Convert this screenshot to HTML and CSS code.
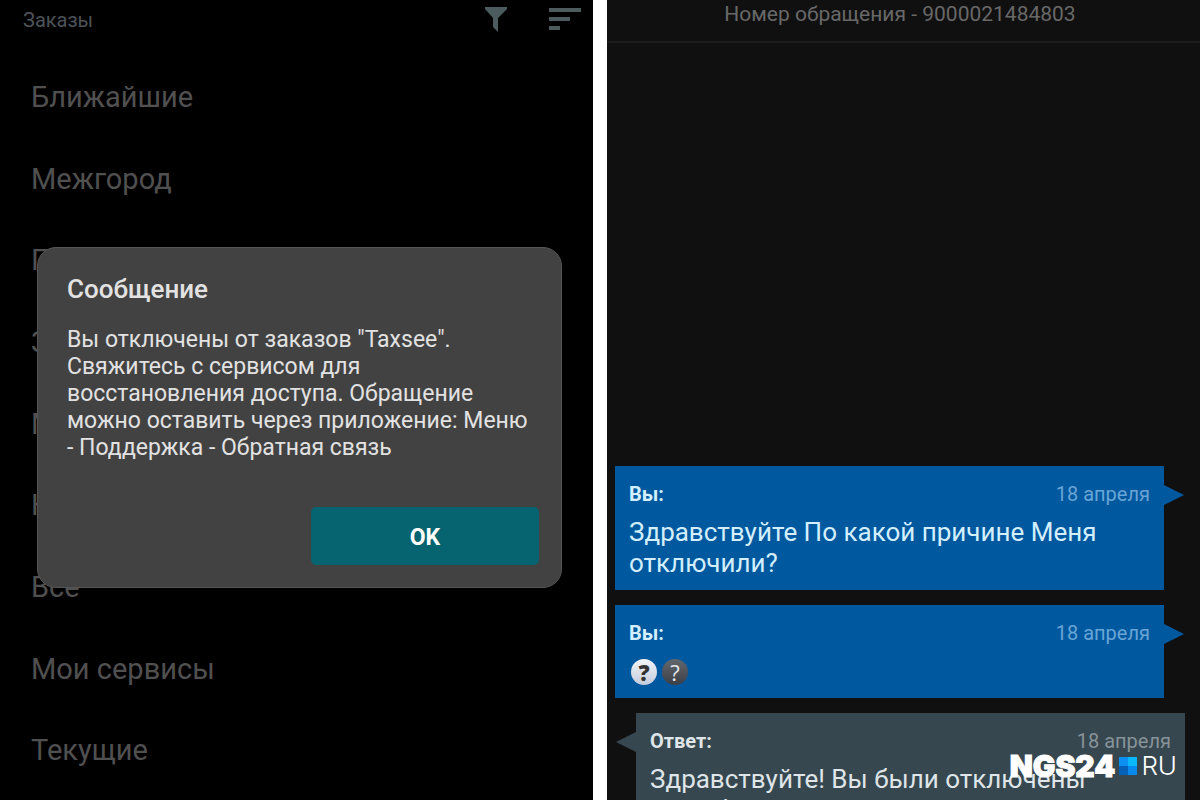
FILE: index.html
```html
<!DOCTYPE html>
<html lang="ru">
<head>
  <meta charset="UTF-8">
  <meta name="viewport" content="width=device-width, initial-scale=1.0">
  <title>Заказы</title>
  <link rel="stylesheet" href="styles.css">
</head>
<body>
  <main class="screens">
    <section class="orders">
      <header class="orders-header">
        <h1>Заказы</h1>
        <div class="tools">
          <button class="tool" type="button" aria-label="Фильтр">
            <svg width="24" height="28" viewBox="0 0 24 28"><path d="M1 1h22v2l-9 9v14l-5-5v-9L1 3z"/></svg>
          </button>
          <button class="tool" type="button" aria-label="Сортировка">
            <svg width="32" height="28" viewBox="0 0 32 28"><path d="M0 2h32v4H0zM0 11h21v4H0zM0 20h11v4H0z"/></svg>
          </button>
        </div>
      </header>
      <ul class="order-list">
        <li>Ближайшие</li>
        <li>Межгород</li>
        <li>П</li>
        <li>З</li>
        <li>М</li>
        <li>Н</li>
        <li>Все</li>
        <li>Мои сервисы</li>
        <li>Текущие</li>
      </ul>

      <div class="overlay">
        <div class="dialog" role="dialog" aria-labelledby="dialog-title">
          <h2 id="dialog-title">Сообщение</h2>
          <p>Вы отключены от заказов "Taxsee". Свяжитесь с сервисом для восстановления доступа. Обращение можно оставить через приложение: Меню - Поддержка - Обратная связь</p>
          <button class="ok" type="button">OK</button>
        </div>
      </div>
    </section>

    <section class="support">
      <header class="support-header">Номер обращения - 9000021484803</header>
      <div class="thread">
        <article class="message you">
          <div class="meta"><b>Вы:</b><time>18 апреля</time></div>
          <p>Здравствуйте По какой причине Меня отключили?</p>
        </article>
        <article class="message you">
          <div class="meta"><b>Вы:</b><time>18 апреля</time></div>
          <div class="smiles">
            <span class="smile light">?</span>
            <span class="smile dark">?</span>
          </div>
        </article>
        <article class="message answer">
          <div class="meta"><b>Ответ:</b><time>18 апреля</time></div>
          <p>Здравствуйте! Вы были отключены<br>по информации</p>
        </article>
      </div>

      <div class="watermark">
        <span class="brand">NGS24</span>
        <svg width="18" height="18" viewBox="0 0 18 18">
          <path fill="#0b8ff0" d="M0 0h9v9H0z"/>
          <path fill="#08b8fb" d="M9 0h9v9H9z"/>
          <path fill="#0560b8" d="M0 9h9v9H0z"/>
          <path fill="#0789ee" d="M9 9h9v9H9z"/>
        </svg>
        <span class="zone">RU</span>
      </div>
    </section>
  </main>
</body>
</html>
```
FILE: styles.css
```css
* {
  box-sizing: border-box;
}

body {
  margin: 0;
  font-family: Roboto, "Noto Sans", sans-serif;
  background: #fff;
}

h1, h2, p, ul {
  margin: 0;
  padding: 0;
}

button {
  border: none;
  padding: 0;
  font-family: inherit;
  cursor: pointer;
}

.screens {
  display: grid;
  grid-template-columns: 1fr 1fr;
  gap: 14px;
  height: 100vh;
}

.orders, .support {
  position: relative;
  display: flex;
  flex-direction: column;
  overflow: hidden;
}

/* Orders screen */
.orders {
  background: #000;
}

.orders-header {
  display: flex;
  justify-content: space-between;
  height: 56px;
  padding: 6px 12px 0 23px;
}

.orders-header h1 {
  font-size: 20px;
  font-weight: 400;
  line-height: 28px;
  color: #4d5358;
}

.tools {
  display: flex;
  align-items: flex-start;
  gap: 41px;
}

.tool {
  background: none;
}

.tool svg {
  display: block;
  fill: #4c5b5e;
}

.order-list {
  flex: 1;
  display: flex;
  flex-direction: column;
  padding: 0 31px 9px;
  list-style: none;
  font-size: 29px;
  color: #505050;
}

.order-list li {
  flex: 1;
  display: flex;
  align-items: center;
}

.overlay {
  position: absolute;
  inset: 0;
  display: flex;
  align-items: center;
  padding: 34px 31px 0 37px;
}

.dialog {
  flex: 1;
  display: flex;
  flex-direction: column;
  padding: 25px 22px 22px 29px;
  background: #424242;
  border: 1px solid #555;
  border-radius: 19px;
  color: #e2e2e2;
}

.dialog h2 {
  font-size: 26px;
  font-weight: 500;
  line-height: 32px;
}

.dialog p {
  margin-top: 21px;
  font-size: 23px;
  line-height: 27px;
}

.ok {
  align-self: flex-end;
  width: 228px;
  height: 58px;
  margin-top: 46px;
  padding-top: 3px;
  background: #066370;
  border-radius: 5px;
  color: #fff;
  font-size: 23px;
  font-weight: 700;
}

/* Support screen */
.support {
  background: #101010;
}

.support-header {
  height: 43px;
  padding-right: 7px;
  border-bottom: 2px solid #1c1c1c;
  font-size: 21px;
  line-height: 28px;
  text-align: center;
  color: #686868;
}

.thread {
  flex: 1;
  display: flex;
  flex-direction: column;
  justify-content: flex-end;
  gap: 15px;
  padding: 0 15px 0 8px;
}

.message {
  position: relative;
  padding: 16px 14px 11px;
}

.message::after {
  content: "";
  position: absolute;
  top: 19px;
  width: 20px;
  height: 20px;
}

.you {
  margin-right: 21px;
  background: #00589f;
  color: #d3effd;
}

.you::after {
  left: 100%;
  background: #00589f;
  clip-path: polygon(0 0, 100% 50%, 0 100%);
}

/* the last answer runs below the edge of the screen */
.answer {
  margin-left: 21px;
  margin-bottom: -37px;
  background: #37474f;
  color: #dfe5e8;
}

.answer::after {
  right: 100%;
  background: #37474f;
  clip-path: polygon(100% 0, 0 50%, 100% 100%);
}

.meta {
  display: flex;
  justify-content: space-between;
  margin-bottom: 11px;
  font-size: 20px;
  line-height: 24px;
}

.meta time {
  color: #69a5d6;
}

.answer .meta time {
  color: #87939a;
}

.message p {
  font-size: 26px;
  line-height: 31px;
}

.smiles {
  display: flex;
  align-items: center;
  gap: 5px;
  height: 31px;
  padding-left: 2px;
}

.smile {
  width: 26px;
  height: 26px;
  border-radius: 50%;
  font-family: "Open Sans", sans-serif;
  font-size: 22px;
  line-height: 26px;
  text-align: center;
}

.light {
  background: linear-gradient(#f3f5f8, #c3cbdb);
  color: #333;
  font-weight: 800;
}

.dark {
  background: linear-gradient(#63686e, #3b3f45);
  color: #e4e8ec;
}

.watermark {
  position: absolute;
  right: 23px;
  bottom: 19px;
  display: flex;
  align-items: center;
  gap: 4px;
  color: #fff;
  font-family: Inter, sans-serif;
  font-size: 26px;
  line-height: 30px;
}

.brand {
  font-size: 30px;
  font-weight: 900;
  -webkit-text-stroke: 1px #fff;
}

.zone {
  font-weight: 300;
}
```
